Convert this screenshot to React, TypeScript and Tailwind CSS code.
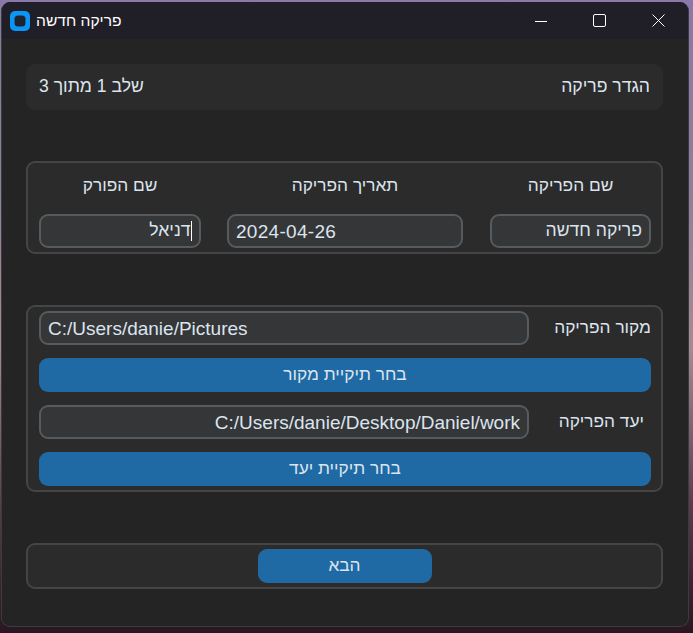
const font = "font-['Liberation_Sans',sans-serif]";

function Field({ width, text, align = "right", caret = false, latin = false, spaced = false }: { width: string; text: string; align?: "left" | "right"; caret?: boolean; latin?: boolean; spaced?: boolean }) {
  return (
    <div
      className={`${width} h-[34px] shrink-0 rounded-[9px] border-2 border-[#565b5e] bg-[#343638] px-[7px] flex items-center leading-none text-[#dce4ee] ${latin ? "text-[19px]" : "text-[17.6px]"} ${spaced ? "tracking-[0.3px]" : ""} ${align === "right" ? "justify-end" : "justify-start"}`}
    >
      <span>{text}</span>
      {caret && <span className="w-[1.5px] h-[20px] bg-white shrink-0" />}
    </div>
  );
}

function BlueButton({ text, width }: { text: string; width: string }) {
  return (
    <button className={`${width} h-[34px] shrink-0 rounded-[9px] bg-[#1f6aa5] text-[#dce4ee] text-[17.3px] leading-none flex items-center justify-center`}>
      {text}
    </button>
  );
}

function Group({ children, className }: { children: React.ReactNode; className: string }) {
  return <div className={`rounded-[9px] border-2 border-[#454545] bg-[#2b2b2b] ${className}`}>{children}</div>;
}

function PathRow({ label, value, labelPad, right = false }: { label: string; value: string; labelPad: string; right?: boolean }) {
  return (
    <div className="flex items-center justify-between">
      <Field width="w-[490px]" text={value} align={right ? "right" : "left"} latin />
      <span className={`text-[17.3px] leading-none text-[#dce4ee] ${labelPad}`}>{label}</span>
    </div>
  );
}

function Column({ label, children, className = "" }: { label: string; children: React.ReactNode; className?: string }) {
  return (
    <div className={`flex flex-col items-center shrink-0 ${className}`}>
      <div className="h-[34px] flex items-center text-[17.3px] leading-none text-[#dce4ee]">{label}</div>
      <div className="mt-[11px]">{children}</div>
    </div>
  );
}

export default function App() {
  return (
    <div className={`w-[693px] h-[633px] overflow-hidden pl-px pt-[2px] bg-[linear-gradient(180deg,#8a78a8_0%,#8d7f9c_30%,#a58a92_55%,#5b3a50_80%,#2a1620_100%)] ${font}`}>
      <div className="w-[688px] h-[625px] rounded-[9px] border border-[#3c3c3c] border-t-0 bg-[#242424] overflow-hidden flex flex-col">
        <div className="h-[37px] shrink-0 bg-[#201e27] flex items-center pl-[8px] text-white">
          <svg width="20" height="20" viewBox="0 0 20 20" className="shrink-0">
            <rect width="20" height="20" rx="5" fill="#0a96f7" />
            <rect x="4.5" y="4.5" width="11" height="11" rx="3.5" fill="#1d2430" />
          </svg>
          <span className="ml-[6px] text-[15.6px] leading-none" dir="rtl">פריקה חדשה</span>
          <div className="ml-auto flex items-center pr-[23px] gap-[46px]">
            <svg width="12" height="12" viewBox="0 0 12 12" fill="none" stroke="#fff" strokeWidth="1">
              <path d="M0 6.5H12" />
            </svg>
            <svg width="13" height="13" viewBox="0 0 13 13" fill="none" stroke="#fff" strokeWidth="1">
              <rect x="0.5" y="0.5" width="12" height="12" rx="1.5" />
            </svg>
            <svg width="13" height="13" viewBox="0 0 13 13" fill="none" stroke="#fff" strokeWidth="1">
              <path d="M0.5 0.5L12.5 12.5M12.5 0.5L0.5 12.5" />
            </svg>
          </div>
        </div>

        <div className="flex flex-col gap-[51px] pl-[24px] pr-[25px] pt-[25px]">
          <div className="h-[46px] rounded-[9px] bg-[#2b2b2b] px-[13px] flex items-center justify-between text-[17.6px] leading-none text-[#dce4ee]">
            <span dir="rtl">שלב 1 מתוך 3</span>
            <span dir="rtl">הגדר פריקה</span>
          </div>

          <Group className="h-[93px] pl-[11px] pr-[10px] pt-[6px] flex">
            <Column label="שם הפורק">
              <Field width="w-[162px]" text="דניאל" caret />
            </Column>
            <Column label="תאריך הפריקה" className="ml-[26px]">
              <Field width="w-[236px]" text="2024-04-26" align="left" latin spaced />
            </Column>
            <Column label="שם הפריקה" className="ml-[27px]">
              <Field width="w-[161px]" text="פריקה חדשה" />
            </Column>
          </Group>

          <Group className="h-[187px] pl-[11px] pr-[10px] pt-[4px] flex flex-col gap-[13px]">
            <PathRow label="מקור הפריקה" value="C:/Users/danie/Pictures" labelPad="" />
            <BlueButton text="בחר תיקיית מקור" width="w-full" />
            <PathRow label="יעד הפריקה" value="C:/Users/danie/Desktop/Daniel/work" labelPad="pr-[7px]" right />
            <BlueButton text="בחר תיקיית יעד" width="w-full" />
          </Group>

          <Group className="h-[46px] flex items-center justify-center">
            <BlueButton text="הבא" width="w-[174px]" />
          </Group>
        </div>
      </div>
    </div>
  );
}
